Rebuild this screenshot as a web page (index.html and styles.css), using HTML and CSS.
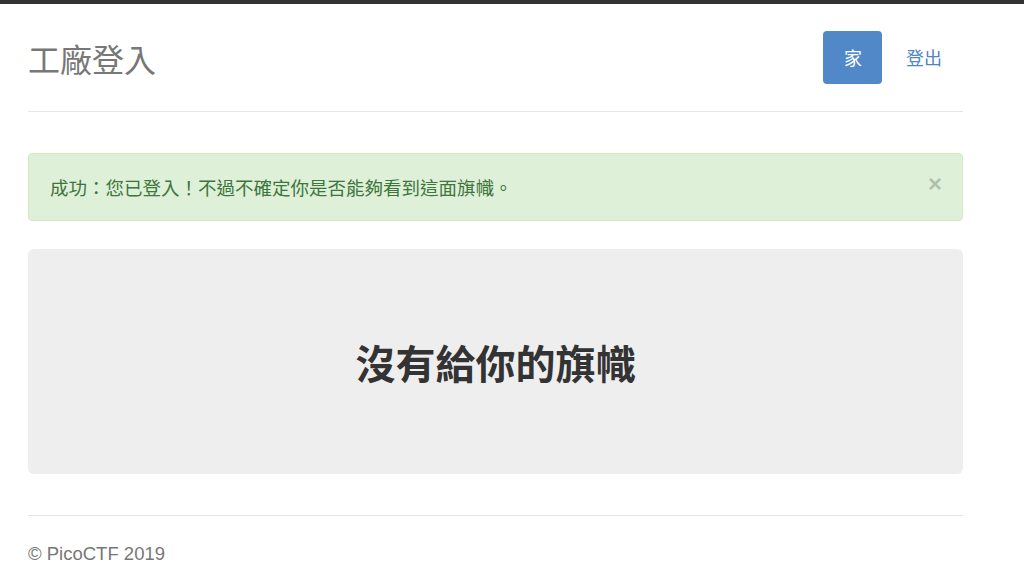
FILE: index.html
```html
<!DOCTYPE html>
<html lang="zh-Hant">
<head>
<meta charset="utf-8">
<title>工廠登入</title>
<link rel="stylesheet" href="styles.css">
</head>
<body>
<div class="topbar"></div>
<div class="container">
  <header class="header">
    <h3 class="brand">工廠登入</h3>
    <nav class="nav">
      <a class="pill active" href="#">家</a>
      <a class="pill" href="#">登出</a>
    </nav>
  </header>
  <div class="alert">
    <span>成功：您已登入！不過不確定你是否能夠看到這面旗幟。</span>
    <span class="close">&times;</span>
  </div>
  <div class="jumbotron">
    <h1 class="flag">沒有給你的旗幟</h1>
  </div>
  <footer class="footer">© PicoCTF 2019</footer>
</div>
</body>
</html>
```

FILE: styles.css
```css
html, body {
  margin: 0;
  padding: 0;
  background: #fff;
  font-family: "Liberation Sans", "Noto Sans CJK TC", Arial, sans-serif;
  color: #333;
}
.topbar {
  height: 4px;
  background: #333;
}
.container {
  width: 935px;
  margin-left: 28px;
}
.header {
  display: flex;
  align-items: center;
  justify-content: space-between;
  padding: 27px 0;
  border-bottom: 1px solid #e5e5e5;
}
.brand {
  margin: 0;
  font-family: "Noto Sans CJK TC", sans-serif;
  font-weight: 400;
  font-size: 32px;
  line-height: 40px;
  color: #777;
}
.nav {
  display: flex;
  gap: 3px;
}
.pill {
  display: block;
  padding: 0 21px;
  height: 53px;
  line-height: 53px;
  font-family: "Noto Sans CJK TC", sans-serif;
  font-size: 18px;
  color: #4f86c6;
  text-decoration: none;
  border-radius: 4px;
}
.pill.active {
  padding: 0 20px 0 21px;
  background: #5088c8;
  color: #fff;
}
.alert {
  margin-top: 41px;
  display: flex;
  justify-content: space-between;
  align-items: center;
  padding: 20px 20px 20px 21px;
  background: #dff0d8;
  border: 1px solid #d6e9c6;
  border-radius: 4px;
  color: #3c763d;
  font-family: "Noto Sans CJK TC", sans-serif;
  font-size: 18.5px;
  line-height: 26px;
}
.close {
  font-family: "Liberation Sans", sans-serif;
  font-weight: 700;
  font-size: 24px;
  line-height: 20px;
  color: #000;
  opacity: 0.2;
  margin-top: -6px;
}
.jumbotron {
  margin-top: 28px;
  height: 225px;
  display: flex;
  align-items: center;
  justify-content: center;
  background: #eee;
  border-radius: 6px;
}
.flag {
  margin: 0;
  font-family: "Noto Sans CJK TC", sans-serif;
  font-weight: 700;
  font-size: 40px;
  line-height: 48px;
  color: #333;
}
.footer {
  margin-top: 41px;
  border-top: 1px solid #e5e5e5;
  padding-top: 27px;
  font-size: 18.5px;
  line-height: 22px;
  color: #777;
}
```
